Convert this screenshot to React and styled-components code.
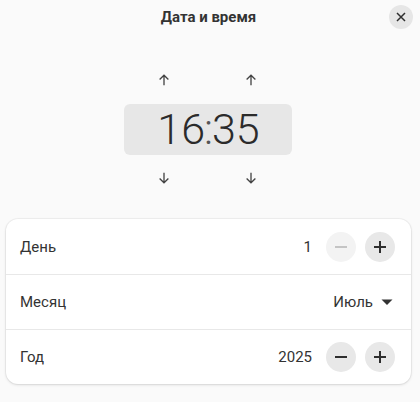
import React, { useState } from "react";
import styled, { createGlobalStyle } from "styled-components";

const Global = createGlobalStyle`
  html, body { margin: 0; padding: 0; }
  body {
    background: #fafafa;
    font-family: Roboto, "Noto Sans", sans-serif;
    color: #2e2e2e;
  }
`;

const Page = styled.div`
  width: 420px;
  height: 402px;
  display: flex;
  flex-direction: column;
  box-sizing: border-box;
  padding: 0 9px 0 6px;
`;

const Header = styled.div`
  height: 34px;
  display: flex;
  align-items: center;
  justify-content: center;
  position: relative;
`;

const Title = styled.h1`
  margin: 0;
  font-size: 15px;
  font-weight: 700;
  color: #333;
`;

const CloseButton = styled.button`
  position: absolute;
  right: -2px;
  top: 5px;
  width: 24px;
  height: 24px;
  border-radius: 50%;
  border: none;
  background: #e6e6e6;
  display: flex;
  align-items: center;
  justify-content: center;
  padding: 0;
  color: #2e2e2e;
`;

const Clock = styled.div`
  display: flex;
  flex-direction: column;
  align-items: center;
  margin-top: 38px;
`;

const ArrowRow = styled.div`
  display: flex;
  justify-content: center;
  gap: 71px;
  height: 16px;
  align-items: center;
  margin-left: -3px;
`;

const ArrowButton = styled.button`
  width: 16px;
  height: 16px;
  border: none;
  background: none;
  padding: 0;
  display: flex;
  align-items: center;
  justify-content: center;
  color: #444;
`;

const TimeBox = styled.div`
  width: 168px;
  height: 51px;
  margin: 16px 0 15px -2px;
  background: #e7e7e7;
  border-radius: 6px;
  display: flex;
  align-items: center;
  justify-content: center;
  font-size: 43px;
  font-weight: 300;
  color: #2b2b2b;
  line-height: 1;
  padding-left: 2px;
  box-sizing: border-box;
`;

const Part = styled.span``;

const Colon = styled.span`
  margin: 0 -1px 0 -1px;
  font-weight: 300;
  color: #555;
`;

const Card = styled.div`
  margin-top: 33px;
  background: #fff;
  border-radius: 12px;
  box-shadow: 0 0 0 1px rgba(0, 0, 0, 0.04), 0 1px 3px rgba(0, 0, 0, 0.12);
  display: flex;
  flex-direction: column;
`;

const Row = styled.div`
  height: 55px;
  display: flex;
  align-items: center;
  padding: 0 16px 0 14px;
  border-top: ${(p) => (p.first ? "none" : "1px solid #e8e8e8")};
  box-sizing: border-box;
`;

const Label = styled.span`
  flex: 1;
  font-size: 15px;
  color: #333;
`;

const Value = styled.span`
  font-size: 15px;
  color: #333;
  margin-right: 14px;
`;

const RoundButton = styled.button`
  width: 30px;
  height: 30px;
  border-radius: 50%;
  border: none;
  padding: 0;
  background: ${(p) => (p.disabled ? "#f3f3f3" : "#e8e8e8")};
  color: ${(p) => (p.disabled ? "#c4c4c4" : "#2e2e2e")};
  display: flex;
  align-items: center;
  justify-content: center;
  & + & {
    margin-left: 9px;
  }
`;

const Dropdown = styled.div`
  display: flex;
  align-items: center;
  gap: 8px;
  font-size: 15px;
  color: #333;
  margin-right: 2px;
`;

const Up = () => (
  <svg width="14" height="14" viewBox="0 0 16 16" fill="none" stroke="currentColor" strokeWidth="1.5">
    <path d="M8 14V2.5M3 7.5l5-5 5 5" />
  </svg>
);

const Down = () => (
  <svg width="14" height="14" viewBox="0 0 16 16" fill="none" stroke="currentColor" strokeWidth="1.5">
    <path d="M8 2v11.5M3 8.5l5 5 5-5" />
  </svg>
);

const Minus = () => (
  <svg width="12" height="12" viewBox="0 0 12 12">
    <rect x="0" y="5" width="12" height="2" fill="currentColor" />
  </svg>
);

const Plus = () => (
  <svg width="12" height="12" viewBox="0 0 12 12">
    <rect x="0" y="5" width="12" height="2" fill="currentColor" />
    <rect x="5" y="0" width="2" height="12" fill="currentColor" />
  </svg>
);

const Close = () => (
  <svg width="10" height="10" viewBox="0 0 10 10" stroke="currentColor" strokeWidth="1.5">
    <path d="M1 1l8 8M9 1l-8 8" />
  </svg>
);

const Caret = () => (
  <svg width="12" height="8" viewBox="0 0 12 8">
    <path d="M0.5 1.5h11L6 7z" fill="#333" />
  </svg>
);

export default function App() {
  const [day] = useState(1);
  const [year] = useState(2025);
  return (
    <>
      <Global />
      <Page>
        <Header>
          <Title>Дата и время</Title>
          <CloseButton aria-label="Закрыть">
            <Close />
          </CloseButton>
        </Header>
        <Clock>
          <ArrowRow>
            <ArrowButton><Up /></ArrowButton>
            <ArrowButton><Up /></ArrowButton>
          </ArrowRow>
          <TimeBox>
            <Part>16</Part>
            <Colon>:</Colon>
            <Part>35</Part>
          </TimeBox>
          <ArrowRow>
            <ArrowButton><Down /></ArrowButton>
            <ArrowButton><Down /></ArrowButton>
          </ArrowRow>
        </Clock>
        <Card>
          <Row first>
            <Label>День</Label>
            <Value>{day}</Value>
            <RoundButton disabled><Minus /></RoundButton>
            <RoundButton><Plus /></RoundButton>
          </Row>
          <Row>
            <Label>Месяц</Label>
            <Dropdown>
              Июль
              <Caret />
            </Dropdown>
          </Row>
          <Row>
            <Label>Год</Label>
            <Value>{year}</Value>
            <RoundButton><Minus /></RoundButton>
            <RoundButton><Plus /></RoundButton>
          </Row>
        </Card>
      </Page>
    </>
  );
}
